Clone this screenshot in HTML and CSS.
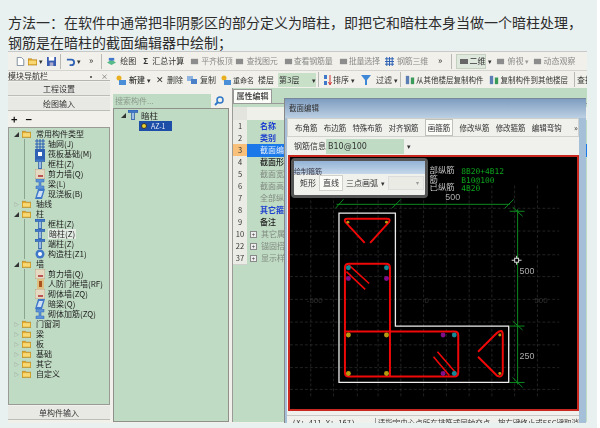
FILE: index.html
```html
<!DOCTYPE html>
<html lang="zh">
<head>
<meta charset="utf-8">
<title>暗柱截面编辑</title>
<link rel="stylesheet" href="styles.css">
</head>
<body>
<svg class="sprite" aria-hidden="true">
  <symbol id="folder" viewBox="0 0 10 8"><path d="M0 1h4l1 1h5v6H0z" fill="#e2a92c" stroke="#a87a1a" stroke-width=".6"/><path d="M1 3h8v4H1z" fill="#f8d872"/></symbol>
  <symbol id="col" viewBox="0 0 10 10"><path d="M0 0h10v2.500H6.500V10h-3V2.500H0z" fill="#3f78c8" stroke="#1c4a94" stroke-width=".5"/><path d="M4.500 3h1v6h-1z" fill="#fff"/></symbol>
  <symbol id="grid" viewBox="0 0 10 10"><path d="M0 2h10M0 5h10M0 8h10M2 0v10M5 0v10M8 0v10" stroke="#2f62b4" stroke-width="1.100"/></symbol>
  <symbol id="slab" viewBox="0 0 10 10"><path d="M0 0h10v10H0z" fill="#2f62b4"/><path d="M3 3h4v4H3z" fill="#fff"/></symbol>
  <symbol id="wall" viewBox="0 0 10 10"><path d="M0 0h10v10H0z" fill="#e6d9c2" stroke="#a08a68" stroke-width=".6"/><path d="M3 6h5v2H3z" fill="#b55"/></symbol>
  <symbol id="beam" viewBox="0 0 10 10"><path d="M1 0h8v3H6v4h3v3H1V7h3V3H1z" fill="#5d94d8" stroke="#2f62b4" stroke-width=".5"/></symbol>
  <symbol id="plate" viewBox="0 0 10 10"><path d="M3 0h7L7 10H0z" fill="#3f78c8"/><path d="M4 2h4L6 8H2z" fill="#cfe0f5"/></symbol>
  <symbol id="gz" viewBox="0 0 10 10"><circle cx="5" cy="5" r="4.500" fill="#3f78c8"/><circle cx="5" cy="5" r="2" fill="#fff"/></symbol>
  <symbol id="door" viewBox="0 0 10 10"><path d="M2 0h7v10H2z" fill="#e0c080"/><path d="M4 2h3v6H4z" fill="#a8541c"/></symbol>
  <symbol id="doc" viewBox="0 0 10 11"><path d="M1 .5h5l3 3v7H1z" fill="#fff" stroke="#6a7a90"/></symbol>
  <symbol id="save" viewBox="0 0 10 10"><path d="M0 0h10v10H0z" fill="#3a5cb0"/><path d="M2 0h6v4H2z" fill="#fff"/><path d="M3 6h4v4H3z" fill="#aac"/></symbol>
  <symbol id="undo" viewBox="0 0 10 10"><path d="M1 3h5a3 3 0 0 1 0 6H4" fill="none" stroke="#2f62b4" stroke-width="2"/></symbol>
  <symbol id="pile" viewBox="0 0 10 10"><path d="M0 6l5-3 5 3-5 3z" fill="#5b8"/><path d="M2 1h6v3H2z" fill="#47c"/></symbol>
  <symbol id="gray" viewBox="0 0 10 10"><path d="M1 2h8v6H1z" fill="#8c8c8c"/></symbol>
  <symbol id="star" viewBox="0 0 10 10"><circle cx="3" cy="3" r="2.500" fill="#e8b020"/><path d="M3 5h7v5H3z" fill="#4a8ed8"/></symbol>
  <symbol id="copy" viewBox="0 0 10 10"><path d="M0 1h6v5H0z" fill="#8fb4e0"/><path d="M4 4h6v5H4z" fill="#4a80c8"/></symbol>
  <symbol id="sortic" viewBox="0 0 10 10"><path d="M1 0h3v4H1zM1 6h3v4H1z" fill="#3f78c8"/><path d="M7 0v9M5.500 7L7 10l1.500-3" stroke="#c33" fill="none"/></symbol>
  <symbol id="filt" viewBox="0 0 10 10"><path d="M0 0h10L6 5v5H4V5z" fill="#3f88d8"/></symbol>
  <symbol id="floors" viewBox="0 0 10 12"><path d="M0 1h4v10H0z" fill="#5b7fb5"/><path d="M6 3h4v8H6z" fill="#3a9a5a"/></symbol>
  <symbol id="lens" viewBox="0 0 10 10"><circle cx="6" cy="4" r="3" fill="none" stroke="#2f78c8" stroke-width="1.500"/><path d="M4 6L1 9" stroke="#2f78c8" stroke-width="2"/></symbol>
</svg>

<main class="page">
  <p class="lead">方法一：在软件中通常把非阴影区的部分定义为暗柱，即把它和暗柱本身当做一个暗柱处理，<br>钢筋是在暗柱的截面编辑器中绘制；</p>

  <section class="shot">
    <div class="bar top">
      <svg class="i i1"><use href="#doc"/></svg>
      <svg class="i i2"><use href="#folder"/></svg><span class="tri">▾</span>
      <svg class="i i3"><use href="#save"/></svg>
      <i class="sep s1"></i>
      <svg class="i"><use href="#undo"/></svg><span class="tri">▾</span>
      <span class="more m1">»</span>
      <i class="sep s2"></i>
      <svg class="i"><use href="#pile"/></svg><span class="t1">绘图</span>
      <span class="sig">Σ</span><span class="t2">汇总计算</span>
      <svg class="i"><use href="#gray"/></svg><span class="t3 off">平齐板顶</span>
      <svg class="i"><use href="#gray"/></svg><span class="t4 off">查找图元</span>
      <svg class="i"><use href="#gray"/></svg><span class="t5 off">查看钢筋量</span>
      <svg class="i"><use href="#gray"/></svg><span class="t6 off">批量选择</span>
      <svg class="i"><use href="#grid"/></svg><span class="t7 off">钢筋三维</span>
      <span class="more m2">»</span>
      <i class="sep s3"></i>
      <span class="view2d"><b class="mini"></b>二维</span><span class="tri">▾</span>
      <svg class="i"><use href="#gray"/></svg><span class="t8 off">俯视</span><span class="tri g">▾</span>
      <svg class="i"><use href="#gray"/></svg><span class="t9 off">动态观察</span>
    </div>

    <div class="work">
      <aside class="nav">
        <header class="navhead"><span>模块导航栏</span><span class="pin">▪ ×</span></header>
        <div class="navbtn">工程设置</div>
        <div class="navbtn">绘图输入</div>
        <div class="plusminus"><b>+</b><b>−</b></div>
        <div class="tree">
          <div class="row r0"><span class="ar">◢</span><svg class="fo"><use href="#folder"/></svg>常用构件类型</div>
          <div class="kids">
            <div class="row"><svg class="ic"><use href="#grid"/></svg>轴网(J)</div>
            <div class="row"><svg class="ic"><use href="#slab"/></svg>筏板基础(M)</div>
            <div class="row"><svg class="ic"><use href="#col"/></svg>框柱(Z)</div>
            <div class="row"><svg class="ic"><use href="#wall"/></svg>剪力墙(Q)</div>
            <div class="row"><svg class="ic"><use href="#beam"/></svg>梁(L)</div>
            <div class="row"><svg class="ic"><use href="#plate"/></svg>现浇板(B)</div>
          </div>
          <div class="row r0"><span class="ar o">▷</span><svg class="fo"><use href="#folder"/></svg>轴线</div>
          <div class="row r0"><span class="ar">◢</span><svg class="fo"><use href="#folder"/></svg>柱</div>
          <div class="kids">
            <div class="row"><svg class="ic"><use href="#col"/></svg>框柱(Z)</div>
            <div class="row"><svg class="ic"><use href="#col"/></svg><span class="cur">暗柱(Z)</span></div>
            <div class="row"><svg class="ic"><use href="#col"/></svg>端柱(Z)</div>
            <div class="row"><svg class="ic"><use href="#gz"/></svg>构造柱(Z1)</div>
          </div>
          <div class="row r0"><span class="ar">◢</span><svg class="fo"><use href="#folder"/></svg>墙</div>
          <div class="kids">
            <div class="row"><svg class="ic"><use href="#wall"/></svg>剪力墙(Q)</div>
            <div class="row"><svg class="ic"><use href="#door"/></svg>人防门框墙(RF)</div>
            <div class="row"><svg class="ic"><use href="#wall"/></svg>砌体墙(ZQ)</div>
            <div class="row"><svg class="ic"><use href="#plate"/></svg>暗梁(Q)</div>
            <div class="row"><svg class="ic"><use href="#beam"/></svg>砌体加筋(ZQ)</div>
          </div>
          <div class="row r0"><span class="ar o">▷</span><svg class="fo"><use href="#folder"/></svg>门窗洞</div>
          <div class="row r0"><span class="ar o">▷</span><svg class="fo"><use href="#folder"/></svg>梁</div>
          <div class="row r0"><span class="ar o">▷</span><svg class="fo"><use href="#folder"/></svg>板</div>
          <div class="row r0"><span class="ar o">▷</span><svg class="fo"><use href="#folder"/></svg>基础</div>
          <div class="row r0"><span class="ar o">▷</span><svg class="fo"><use href="#folder"/></svg>其它</div>
          <div class="row r0"><span class="ar o">▷</span><svg class="fo"><use href="#folder"/></svg>自定义</div>
        </div>
        <div class="navbtn single">单构件输入</div>
      </aside>

      <div class="right">
        <div class="bar second">
          <svg class="i"><use href="#star"/></svg><span class="a1">新建</span><span class="tri">▾</span>
          <span class="x">✕</span><span class="a2">删除</span>
          <svg class="i"><use href="#copy"/></svg><span class="a3">复制</span>
          <svg class="i"><use href="#star"/></svg><span class="a4">重命名</span>
          <span class="a5">楼层</span><span class="floor">第3层</span><span class="tri">▾</span>
          <i class="sep"></i>
          <svg class="i"><use href="#sortic"/></svg><span class="a6">排序</span><span class="tri">▾</span>
          <svg class="i"><use href="#filt"/></svg><span class="a7">过滤</span><span class="tri">▾</span>
          <i class="sep"></i>
          <svg class="i"><use href="#floors"/></svg><span class="a8">从其他楼层复制构件</span>
          <svg class="i"><use href="#floors"/></svg><span class="a9">复制构件到其他楼层</span>
          <i class="sep"></i>
          <span class="a10">查找</span>
        </div>

        <div class="panes">
          <div class="list">
            <div class="search"><span class="inp">搜索构件...</span><svg class="lens"><use href="#lens"/></svg></div>
            <div class="ctree">
              <div class="crow"><span class="ar">◢</span><svg class="ic big"><use href="#col"/></svg>暗柱</div>
              <div class="crow sel"><span class="dot"></span>AZ-1</div>
            </div>
          </div>
          <div class="props">
            <div class="tab">属性编辑</div>
            <div class="tbl">
              <div class="th"><span class="n"></span><span></span></div>
              <div class="tr"><span class="n">1</span><span class="blue">名称</span></div>
              <div class="tr"><span class="n">2</span><span class="blue">类别</span></div>
              <div class="tr on"><span class="n">3</span><span>截面编辑</span></div>
              <div class="tr"><span class="n">4</span><span class="dark">截面形状</span></div>
              <div class="tr"><span class="n">5</span><span class="mut">截面宽度</span></div>
              <div class="tr"><span class="n">6</span><span class="mut">截面高度</span></div>
              <div class="tr"><span class="n">7</span><span class="mut">全部纵筋</span></div>
              <div class="tr"><span class="n">8</span><span class="blue">其它箍筋</span></div>
              <div class="tr"><span class="n">9</span><span class="dark">备注</span></div>
              <div class="tr"><span class="n">10</span><span class="mut"><b class="box">+</b>其它属性</span></div>
              <div class="tr"><span class="n">22</span><span class="mut"><b class="box">+</b>锚固搭接</span></div>
              <div class="tr"><span class="n">37</span><span class="mut"><b class="box">+</b>显示样式</span></div>
            </div>
          </div>
        </div>
      </div>
    </div>

    <div class="dialog">
      <div class="dtitle">截面编辑</div>
      <div class="dinner">
        <div class="dtabs">
          <span>布角筋</span><span>布边筋</span><span>特殊布筋</span><span>对齐钢筋</span><span class="act">画箍筋</span><span>修改纵筋</span><span>修改箍筋</span><span>编辑弯钩</span><span class="more">»</span>
        </div>
        <div class="dinfo"><span class="lab">钢筋信息</span><span class="val">B10@100</span><span class="tri">▾</span></div>
        <div class="cad">
          <svg class="draw" viewBox="288 157 290 253">
            <path class="gridl" d="M288 208H560M288 231H560M288 255H560M288 277H560M288 300H560M288 323H560M288 346H560M288 369H560M288 391H560M309 185V400M332 185V400M356 185V400M377 185V400M400 185V400M423 185V400M446 185V400M469 185V400M492 185V400M515 185V400M538 185V400"/>
            <path class="dim" d="M335 204H510M518 209V386M334 208L342 199M391 208L400 199M505 208L514 199M510 211H525M510 327H525M510 384H525M513 207L523 216M513 322L523 331M513 379L523 389"/>
            <path class="wh" d="M337.500 213H394.500V327H509V384H337.500Z"/>
            <path class="bar1" d="M363.500 243L344 222Q342 218.500 346 218.500H386Q390 218.500 388 222L369 243"/>
            <path class="bar1" d="M343.500 332.500V268Q343.500 264 347.500 264H385Q389 264 389 268V378M343.500 332.500V374Q343.500 378 347.500 378H454Q458 378 458 374V336Q458 332.500 454 332.500H343.500"/>
            <path class="bar2" d="M347 265L368 284M345 272L364 290M433 358L449 377M437 353L457 376"/>
            <path class="bar1" d="M478 353L497 334Q503 329 503 336V373Q503 380 497 377L478 358"/>
            <g class="yel"><circle cx="346.500" cy="222" r="1.500"/><circle cx="385.500" cy="222" r="1.500"/><circle cx="500" cy="336" r="1.500"/><circle cx="500" cy="375" r="1.500"/><circle cx="347" cy="336" r="2.500"/><circle cx="385.500" cy="336" r="2.500"/><circle cx="347" cy="375" r="2.500"/><circle cx="385.500" cy="375" r="2.500"/></g>
            <g class="cya"><circle cx="347" cy="268" r="2.500"/><circle cx="385.500" cy="268" r="2.500"/><circle cx="454" cy="336" r="2.500"/><circle cx="454" cy="375" r="2.500"/></g>
            <g class="pur"><circle cx="347" cy="279" r="2.500"/><circle cx="385.500" cy="279" r="2.500"/><circle cx="442.700" cy="336" r="2.500"/><circle cx="442.700" cy="375" r="2.500"/></g>
            <path class="cross" d="M512 260.500H522M517 256V265"/><rect class="cbox" x="515" y="258.500" width="4" height="4"/>
            <text class="lbl" x="520" y="274">500</text>
            <text class="lbl" x="520" y="360">250</text>
            <text class="lbl" x="445" y="200">500</text>
            <text class="faint" x="305" y="304">-500</text>
            <text class="faint" x="424" y="304">0</text>
            <text class="faint" x="535" y="304">500</text>
            <text class="cn" x="429" y="172">部纵筋</text>
            <text class="cn" x="429" y="181">筋</text>
            <text class="cn" x="429" y="190">已纵筋</text>
            <text class="gr" x="461" y="173">8B20+4B12</text>
            <text class="gr" x="461" y="182">B10@100</text>
            <text class="gr" x="461" y="191">4B20</text>
          </svg>
        </div>
        <div class="dstat"><span class="xy">(X: 411 Y: 167)</span><span class="hint">请指定中心点所在排筋或同轴交点，按右键终止或ESC键取消</span></div>
      </div>
      <div class="float">
        <div class="ftitle">绘制箍筋</div>
        <div class="fbody"><span>矩形</span><span class="act">直线</span><span>三点画弧</span><span class="tri">▾</span><span class="fcombo">▾</span></div>
      </div>
    </div>
  </section>
</main>
</body>
</html>
```
FILE: styles.css
```css
* { box-sizing: border-box; }
html, body { margin: 0; padding: 0; }
body {
  width: 600px;
  height: 428px;
  overflow: hidden;
  background: #fff;
  font-family: "Noto Sans CJK SC", "Liberation Sans", sans-serif;
}
.sprite { position: absolute; width: 0; height: 0; }
.page {
  width: 597px;
  height: 428px;
  background: #e9f0f0;
  padding: 12px 0 0 8px;
  overflow: hidden;
}
.lead {
  margin: 0;
  font-size: 14px;
  line-height: 20px;
  color: #2c2c2c;
  white-space: nowrap;
}
.shot {
  position: relative;
  width: 579px;
  height: 372px;
  margin-top: -1px;
  background: #f1f0ea;
  overflow: hidden;
  font-size: 8px;
  line-height: 10px;
  color: #333;
  filter: blur(.35px);
}
.bar { display: flex; align-items: center; white-space: nowrap; }
.top { height: 20px; border-top: 1px solid #c8c8c8; border-bottom: 1px solid #d4d4d0; padding-left: 8px; }
.i { width: 9px; height: 9px; flex: none; }
.i2 { margin-left: 3px; }
.i3 { margin-left: 3px; }
.tri { font-size: 7px; margin-left: 2px; color: #333; }
.tri.g { color: #999; }
.sep { width: 1px; height: 15px; background: #b8b8b4; flex: none; margin: 0 5px; }
.s1 { margin: 0 5px 0 4px; }
.s2 { margin: 0 5px 0 8px; }
.s3 { margin: 0 4px 0 9px; }
.more { font-size: 9px; margin-left: 8px; }
.m2 { margin-left: 10px; }
.off { color: #8a8a8a; }
.t1 { margin: 0 7px 0 4px; }
.sig { font-weight: 700; margin-right: 4px; }
.t2 { margin-right: 6px; }
.t3 { margin: 0 3px 0 2px; letter-spacing: -.2px; }
.t4 { margin: 0 6px 0 2px; letter-spacing: -.2px; }
.t5 { margin: 0 6px 0 1px; letter-spacing: -.2px; }
.t6 { margin: 0 5px 0 1px; letter-spacing: -.2px; }
.t7 { margin-left: 3px; letter-spacing: -.2px; }
.t8 { margin-left: 2px; }
.t9 { margin-left: 1px; }
.view2d { display: flex; align-items: center; width: 30px; height: 15px; padding-left: 3px; background: #dfe8dc; border: 1px solid #c4d0c0; }
.mini { width: 9px; height: 5px; background: #666; margin-right: 1px; }
.tri + svg { margin-left: 4px; }

.work { display: flex; height: 351px; }
.nav { width: 102px; flex: none; display: flex; flex-direction: column; margin-right: 3px; }
.navhead { height: 10px; display: flex; justify-content: space-between; border-bottom: 1px solid #b4b4b0; padding-right: 2px; overflow: hidden; }
.pin { color: #666; font-size: 7px; word-spacing: 5px; }
.navbtn {
  height: 14px;
  margin: 1px 0 0;
  text-align: center;
  line-height: 14px;
  background: #e8e8e4;
  border-bottom: 1px solid #bdbdb8;
  flex: none;
}
.plusminus { height: 16px; padding-left: 3px; display: flex; gap: 8px; align-items: center; font-size: 11px; color: #111; flex: none; }
.tree {
  flex: 1;
  background: #c0dbc4;
  border: 1px solid #9a9a96;
  padding-top: 1px;
}
.row { height: 10px; display: flex; align-items: center; white-space: nowrap; color: #222; }
.r0 { padding-left: 5px; }
.ar { font-size: 5px; width: 6px; flex: none; color: #333; margin-right: 1px; }
.ar.o { color: #888; }
.fo { width: 9px; height: 8px; margin: 0 5px 0 1px; flex: none; }
.kids { margin-left: 15px; padding-left: 3px; border-left: 1px solid #8aa48e; }
.kids .row { padding-left: 7px; }
.ic { width: 10px; height: 10px; margin-right: 3px; flex: none; }
.cur { background: #e4ebe4; padding: 0 1px; }
.single { margin: 1px 0 2px; }

.right { flex: 1; min-width: 0; display: flex; flex-direction: column; }
.second { height: 17px; padding-left: 3px; overflow: hidden; }
.second .i { width: 10px; height: 10px; }
.a1 { margin-left: 3px; font-weight: 500; }
.x { font-size: 9px; margin: 0 2px 0 5px; }
.a2 { margin: 0 4px 0 1px; }
.a3 { margin: 0 5px 0 3px; }
.a4 { margin: 0 4px 0 2px; font-size: 7px; }
.a5 { margin-right: 4px; }
.floor { flex: none; width: 38px; height: 14px; background: #c8e0c8; padding-left: 1px; line-height: 14px; }
.floor + .tri { margin-left: -4px; }
.second .sep { margin: 0 4px 0 5px; }
.second .floor + .tri + .sep { margin: 0 4px 0 2px; }
.a6 + .tri + svg { margin-left: 6px; }
.a7 { margin-left: 5px; }
.a8 { margin: 0 5px 0 1px; font-size: 7.5px; flex: none; }
.a9 { margin: 0 1px 0 2px; font-size: 7.5px; flex: none; }
.a10 { margin-left: -2px; flex: none; }
.second .a7 + .tri + .sep { margin: 0 4px 0 2px; }

.panes { flex: 1; display: flex; min-height: 0; }
.list { width: 116px; flex: none; display: flex; flex-direction: column; margin-right: 3px; }
.search { height: 20px; display: flex; align-items: center; justify-content: space-between; padding-top: 5px; flex: none; }
.inp { width: 98px; height: 14px; background: #c0dbc4; color: #8a9a8c; line-height: 14px; padding-left: 2px; }
.lens { width: 10px; height: 10px; margin-right: 5px; }
.ctree { flex: 1; background: #c0dbc4; border: 1px solid #8f8f8b; padding: 0 0 0 7px; }
.crow { height: 12px; display: flex; align-items: center; color: #222; font-size: 8.500px; }
.ic.big { margin-right: 3px; }
.sel { width: 33px; margin-left: 18px; background: #1d4fa8; color: #dfe6f5; padding-left: 2px; font-size: 7px; height: 10px; }
.dot { width: 6px; height: 6px; border-radius: 50%; background: #e8d030; border: 1px solid #333; margin-right: 4px; flex: none; }

.props { flex: 1; min-width: 0; background: #c0dbc4; border-left: 1px solid #9a9a96; overflow: hidden; }
.tab {
  width: 39px;
  height: 14px;
  margin-top: 1px;
  background: #fbfbf8;
  border: 1px solid #999;
  border-bottom: 0;
  line-height: 12px;
  text-align: center;
  font-weight: 500;
}
.tbl { background: #c0dbc4; padding-top: 3px; border-top: 1px solid #999; }
.th { height: 13px; display: grid; grid-template-columns: 14px 1fr; background: #f0f0ea; white-space: nowrap; }
.th .n { background: #e4e4de; }
.tr { height: 12px; display: grid; grid-template-columns: 14px 1fr; white-space: nowrap; line-height: 12px; }
.tr .n { background: #ecece6; text-align: center; border-bottom: 1px solid #cfcfca; font-size: 7.500px; color: #333; }
.tr span + span { padding-left: 13px; }
.blue { color: #1c3fd0; font-weight: 700; }
.dark { color: #222; font-weight: 500; }
.mut { color: #808a80; }
.on span + span { background: #1a78e8; color: #e6f0ff; }
.on .n { background: #f8c078; }
.box { font-weight: 400; width: 7px; height: 7px; display: inline-block; border: 1px solid #888; background: #eee; font-size: 6px; line-height: 5px; text-align: center; margin: 0 4px 0 -10px; color: #333; }

.dialog {
  position: absolute;
  left: 276px;
  top: 47px;
  width: 302px;
  height: 325px;
  display: flex;
  flex-direction: column;
  background: #a6bfd9;
  border-top: 1px solid #77889c;
  border-left: 1px solid #888;
  padding: 0 7px 0 2px;
}
.dtitle { height: 19px; line-height: 18px; margin: 0 -7px 0 -2px; padding-left: 4px; font-size: 7.500px; color: #333; background: linear-gradient(#7f9dc0, #bcd0e3); }
.dinner { flex: 1; min-height: 0; display: flex; flex-direction: column; background: #f0f0ec; }
.dtabs { height: 19px; display: flex; align-items: center; padding-left: 7px; border: 1px solid #d0d0cc; white-space: nowrap; gap: 6.200px; font-size: 7.500px; }
.dtabs .act { background: #fbfbf8; border: 1px solid #c0c0bc; height: 17px; line-height: 15px; padding: 0 2px; }
.dtabs .more { margin-left: 6px; font-size: 8px; }
.dinfo { height: 18px; display: flex; align-items: center; padding-left: 7px; }
.lab { width: 32px; flex: none; }
.val { width: 78px; height: 15px; background: #c0dbc4; padding-left: 2px; font: 8px/15px "DejaVu Sans", sans-serif; }
.dinfo .tri { margin-left: 3px; }
.cad { height: 256px; border: 2px solid #c8281e; background: #000; flex: none; margin-left: 1px; }
.draw { display: block; width: 100%; height: 100%; }
.gridl { stroke: #3a3a3a; stroke-width: .6; stroke-dasharray: 3 2; fill: none; }
.dim { stroke: #0d8a1e; stroke-width: 1; fill: none; }
.wh { stroke: #eee; stroke-width: 1.300; fill: none; }
.bar1 { stroke: #f00808; stroke-width: 2; fill: none; stroke-linejoin: round; }
.bar2 { stroke: #f00808; stroke-width: 1.600; fill: none; }
.yel circle { fill: #b89a10; }
.cya circle { fill: #138a96; }
.pur circle { fill: #80108a; }
.cross { stroke: #ddd; stroke-width: 1; }
.cbox { fill: #000; stroke: #ddd; stroke-width: 1; }
.lbl { fill: #aaa; font: 9px "Liberation Sans", sans-serif; }
.faint { fill: #303030; font: 8px "Liberation Sans", sans-serif; }
.cn { fill: #c4c4c4; font-size: 8.500px; }
.gr { fill: #0ba51c; font: 8px "DejaVu Sans Mono", monospace; }
.dstat { flex: 1; min-height: 0; display: flex; margin-top: 4px; padding-top: 2px; border-top: 1px solid #c8c8c4; overflow: hidden; white-space: nowrap; font-size: 7.500px; }
.xy { width: 91px; padding-left: 5px; font: 7px/10px "DejaVu Sans Mono", monospace; border-right: 1px solid #999; }
.hint { padding-left: 2px; }

.float {
  position: absolute;
  left: 6px;
  top: 59px;
  width: 137px;
  height: 40px;
  border: 3px solid #555;
  border-radius: 4px;
  background: #f0f0ec;
  overflow: hidden;
}
.ftitle { height: 13px; font-size: 7px; line-height: 20px; color: #334; background: linear-gradient(#93b3d6, #c6d8ea); }
.fbody { display: flex; align-items: center; gap: 3px; height: 18px; padding-left: 6px; white-space: nowrap; }
.fbody .act { background: #fbfbf8; border: 1px solid #d0d0cc; height: 16px; line-height: 14px; padding: 0 3px; }
.fbody .tri { margin-left: 0; }
.fcombo { width: 36px; height: 14px; background: #ebebe6; border: 1px solid #ddd; text-align: right; padding-right: 4px; font-size: 6px; line-height: 12px; color: #999; }
```
